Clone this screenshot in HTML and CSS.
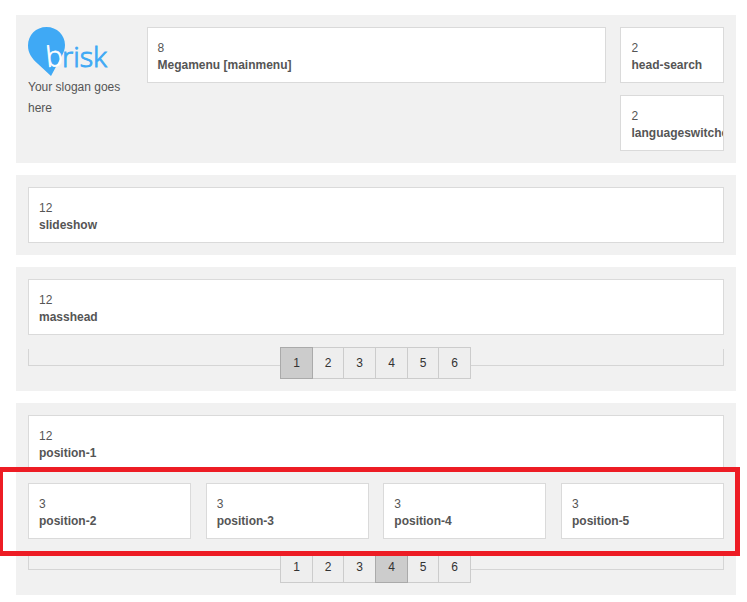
FILE: index.html
```html
<!DOCTYPE html>
<html lang="en">
<head>
<meta charset="utf-8">
<title>Layout positions</title>
<link rel="stylesheet" href="styles.css">
</head>
<body>
<main class="layout">
  <section class="panel header">
    <div class="brand">
      <svg class="logo" width="84" height="50" viewBox="0 0 84 50" role="img" aria-label="brisk">
        <path class="pin" d="M18.500 0C29 0 37 8 37 18C37 22 35.800 25.500 33.500 29.500L23 49L9.500 36.500C3.500 31 0 26 0 18.500C0 8 8 0 18.500 0Z"/>
        <text class="logo-b" x="19" y="40" transform="rotate(-6 19 40)">b</text>
        <text class="logo-rest" x="34" y="40" textLength="45" lengthAdjust="spacingAndGlyphs">risk</text>
      </svg>
      <div class="slogan">Your slogan goes here</div>
    </div>
    <div class="box"><span>8</span><strong>Megamenu [mainmenu]</strong></div>
    <div class="stack">
      <div class="box"><span>2</span><strong>head-search</strong></div>
      <div class="box"><span>2</span><strong>languageswitcher</strong></div>
    </div>
  </section>

  <section class="panel">
    <div class="box"><span>12</span><strong>slideshow</strong></div>
  </section>

  <section class="panel">
    <div class="box"><span>12</span><strong>masshead</strong></div>
    <div class="pager-row">
      <i class="rail rail-left"></i>
      <div class="pager"><b class="active">1</b><b>2</b><b>3</b><b>4</b><b>5</b><b>6</b></div>
      <i class="rail rail-right"></i>
    </div>
  </section>

  <section class="panel marked">
    <div class="box"><span>12</span><strong>position-1</strong></div>
    <div class="columns">
      <div class="box"><span>3</span><strong>position-2</strong></div>
      <div class="box"><span>3</span><strong>position-3</strong></div>
      <div class="box"><span>3</span><strong>position-4</strong></div>
      <div class="box"><span>3</span><strong>position-5</strong></div>
    </div>
    <div class="pager-row">
      <i class="rail rail-left"></i>
      <div class="pager"><b>1</b><b>2</b><b>3</b><b class="active">4</b><b>5</b><b>6</b></div>
      <i class="rail rail-right"></i>
    </div>
    <div class="highlight"></div>
  </section>
</main>
</body>
</html>
```
FILE: styles.css
```css
* { box-sizing: border-box; }

body {
  margin: 0;
  background: #fff;
  color: #555;
  font: 12px/17px "Liberation Sans", Arial, sans-serif;
  overflow: hidden;
}

.layout {
  display: flex;
  flex-direction: column;
  gap: 12px;
  width: 720px;
  margin: 15px 0 0 16px;
}

.panel {
  display: flex;
  flex-direction: column;
  gap: 12px;
  padding: 12px;
  background: #f1f1f1;
}

.box {
  height: 56px;
  padding: 12px 10px 0;
  border: 1px solid #dadada;
  background: #fff;
  overflow: hidden;
}

.box span,
.box strong { display: block; white-space: nowrap; }

.header {
  display: grid;
  grid-template-columns: 104px 459px 104px;
  column-gap: 14px;
  justify-content: space-between;
  align-items: start;
}

.stack { display: grid; gap: 12px; }
.stack .box { padding-left: 10.5px; }

.logo { display: block; }
.pin { fill: #3fa9f5; }
.logo-b,
.logo-rest { font: 300 28px "Open Sans", "Noto Sans", sans-serif; }
.logo-b { fill: #fff; stroke: #fff; stroke-width: 0.7; }
.logo-rest { fill: #3fa9f5; stroke: #3fa9f5; stroke-width: 0.9; }
.slogan { line-height: 21px; }

.columns {
  display: grid;
  grid-template-columns: repeat(4, 163px);
  justify-content: space-between;
}

.pager-row {
  display: flex;
  height: 32px;
}

.rail {
  height: 17px;
  margin-top: 2px;
  border-bottom: 1px solid #d5d5d5;
}

.rail-left { width: 252px; border-left: 1px solid #d5d5d5; }
.rail-right { flex: 1; border-right: 1px solid #d5d5d5; }

.pager {
  display: grid;
  grid-template-columns: 33px 31px 32px 32px 31px 32px;
}

.pager b {
  border: 1px solid #ccc;
  border-left: 0;
  background: #eee;
  color: #333;
  font-weight: normal;
  line-height: 30px;
  text-align: center;
}

.pager b:first-child { border-left: 1px solid #ccc; }

.pager .active,
.pager .active:first-child {
  border-color: #aaa;
  background: #ccc;
}

.pager .active:not(:first-child) {
  margin-left: -1px;
  border-left: 1px solid #aaa;
}

.marked { position: relative; }

.highlight {
  position: absolute;
  top: 64px;
  left: -18px;
  width: 742px;
  height: 89px;
  border: 5px solid #ed1c24;
}
```
